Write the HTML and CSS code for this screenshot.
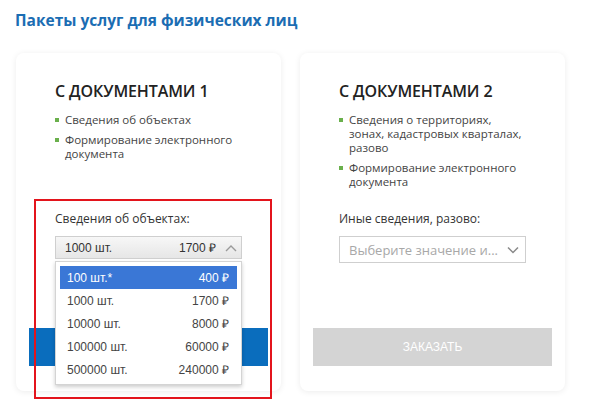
FILE: index.html
```html
<!DOCTYPE html>
<html lang="ru">
<head>
  <meta charset="UTF-8">
  <meta name="viewport" content="width=device-width, initial-scale=1.0">
  <title>Пакеты услуг для физических лиц</title>
  <link rel="stylesheet" href="styles.css">
</head>
<body>
  <h1 class="page-title">Пакеты услуг для физических лиц</h1>

  <div class="packages">
    <div class="package">
      <div class="package-body">
        <h2 class="package-name">С ДОКУМЕНТАМИ 1</h2>
        <ul class="features">
          <li>Сведения об объектах</li>
          <li>Формирование электронного документа</li>
        </ul>
        <div class="field">
          <label class="field-label">Сведения об объектах:</label>
          <div class="select open">
            <span class="select-value">1000 шт.</span>
            <span class="select-price">1700 ₽</span>
            <svg class="chevron" width="12" height="8" viewBox="0 0 12 8"><path d="M1 7 L6 2 L11 7" fill="none" stroke="#9a9a9a" stroke-width="1.4"/></svg>
            <ul class="options">
              <li class="active"><span>100 шт.*</span><span>400 ₽</span></li>
              <li><span>1000 шт.</span><span>1700 ₽</span></li>
              <li><span>10000 шт.</span><span>8000 ₽</span></li>
              <li><span>100000 шт.</span><span>60000 ₽</span></li>
              <li><span>500000 шт.</span><span>240000 ₽</span></li>
            </ul>
          </div>
        </div>
      </div>
      <button class="order-btn">ЗАКАЗАТЬ</button>
      <div class="highlight"></div>
    </div>

    <div class="package">
      <div class="package-body">
        <h2 class="package-name">С ДОКУМЕНТАМИ 2</h2>
        <ul class="features">
          <li>Сведения о территориях, зонах, кадастровых кварталах, разово</li>
          <li>Формирование электронного документа</li>
        </ul>
        <div class="field">
          <label class="field-label">Иные сведения, разово:</label>
          <div class="select empty">
            <span class="placeholder">Выберите значение и...</span>
            <svg class="chevron" width="12" height="8" viewBox="0 0 12 8"><path d="M1 1.5 L6 6.5 L11 1.5" fill="none" stroke="#8a8a8a" stroke-width="1.5"/></svg>
          </div>
        </div>
      </div>
      <button class="order-btn" disabled>ЗАКАЗАТЬ</button>
    </div>
  </div>
</body>
</html>
```

FILE: styles.css
```css
body {
  margin: 0;
  background-color: #fff;
  font-family: "Open Sans", "Noto Sans", sans-serif;
  color: #333;
}

.page-title {
  margin: 0;
  padding: 8px 0 0 15px;
  font-size: 15.5px;
  font-weight: 700;
  line-height: 24px;
  color: #1b6db3;
}

.packages {
  display: flex;
  gap: 19px;
  padding: 21px 0 24px 16px;
}

.package {
  position: relative;
  width: 265px;
  height: 338px;
  box-sizing: border-box;
  padding: 0 13px 25px;
  display: flex;
  flex-direction: column;
  background-color: #fff;
  border-radius: 8px;
  box-shadow: 0 1px 6px rgba(0, 0, 0, 0.08);
}

.package-body {
  flex: 1;
  padding: 0 26px;
}

.package-name {
  margin: 26px 0 10px;
  font-size: 16px;
  font-weight: 600;
  line-height: 24px;
  letter-spacing: -0.1px;
  color: #222;
}

.features {
  list-style: none;
  margin: 0;
  padding: 0;
}

.features li {
  position: relative;
  padding-left: 10px;
  margin-bottom: 6px;
  font-size: 11.5px;
  line-height: 14px;
  color: #444;
}

.features li::before {
  content: "";
  position: absolute;
  left: 0;
  top: 5px;
  width: 4px;
  height: 4px;
  background-color: #6ab04c;
}

.field {
  position: absolute;
  left: 39px;
  top: 158px;
  width: 187px;
}

.field-label {
  display: block;
  font-size: 12px;
  line-height: 16px;
  color: #333;
  margin-bottom: 9px;
}

.select {
  position: relative;
  display: flex;
  align-items: center;
  box-sizing: border-box;
  border: 1px solid #cfcfcf;
}

.select.open {
  height: 23px;
  padding: 0 4px 0 9px;
  font-family: "Liberation Sans", Arial, sans-serif;
  font-size: 12px;
  color: #333;
  background: linear-gradient(#f7f7f7, #e6e6e6);
}

.select-value {
  flex: 1;
}

.select-price {
  margin-right: 9px;
}

.select.empty {
  height: 27px;
  padding: 0 6px 0 9px;
  font-size: 13px;
  color: #a8a8a8;
}

.placeholder {
  flex: 1;
  white-space: nowrap;
}

.options {
  position: absolute;
  left: -1px;
  right: -1px;
  top: 24px;
  margin: 0;
  padding: 4px 4px 3px;
  list-style: none;
  background-color: #fff;
  border: 1px solid #d4d4d4;
  box-shadow: 0 2px 4px rgba(0, 0, 0, 0.2);
  z-index: 2;
}

.options li {
  display: flex;
  justify-content: space-between;
  height: 23px;
  align-items: center;
  padding: 0 8px 0 7px;
  color: #444;
}

.options li.active {
  background-color: #3a77d6;
  color: #fff;
}

.order-btn {
  height: 38px;
  border: none;
  font-family: "Liberation Sans", Arial, sans-serif;
  font-size: 12px;
  color: #fff;
  background-color: #0a6dbd;
}

.order-btn:disabled {
  background-color: #d4d4d4;
}

.highlight {
  position: absolute;
  left: 18px;
  top: 146px;
  width: 238px;
  height: 200px;
  box-sizing: border-box;
  border: 2px solid #e3141c;
  z-index: 3;
  pointer-events: none;
}
```
